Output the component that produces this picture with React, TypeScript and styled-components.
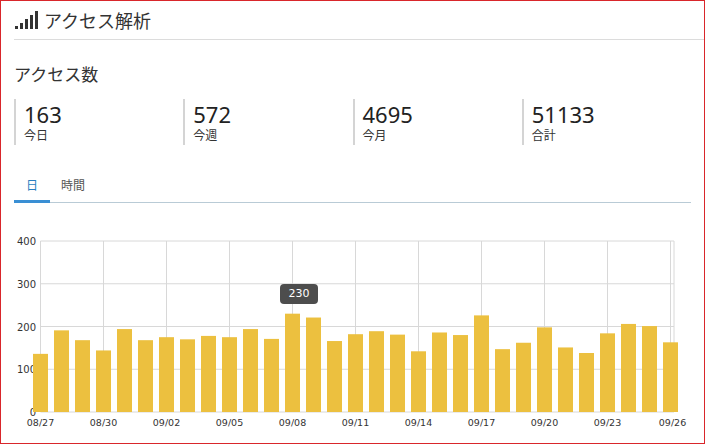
import React from "react";
import styled, { createGlobalStyle } from "styled-components";

const G = createGlobalStyle`
  html,body{margin:0;padding:0;background:#fff;}
  body{font-family:"Noto Sans CJK JP","Noto Sans",sans-serif;color:#222;}
`;
const Frame = styled.div`
  width:705px;height:444px;box-sizing:border-box;border:1px solid #d9262b;overflow:hidden;position:relative;
`;
const Header = styled.div`
  height:38px;margin:0 0 0 13px;border-bottom:1px solid #dcdcdc;display:flex;align-items:center;gap:4px;
  font-size:18px;color:#333;
`;
const Body = styled.div`padding:0 13px 0 13px;`;
const Title = styled.div`font-size:17px;margin-top:21px;height:26px;line-height:26px;color:#333;`;
const Stats = styled.div`display:flex;margin-top:12px;`;
const Stat = styled.div`
  width:180px;border-left:2px solid #d4d4d4;padding-left:8px;height:46px;box-sizing:border-box;
  display:flex;flex-direction:column;
`;
const Num = styled.div`font-family:"Noto Sans","Noto Sans CJK JP",sans-serif;font-size:22px;line-height:26px;margin-top:2px;color:#222;`;
const Lab = styled.div`font-size:12px;line-height:15px;color:#333;`;
const Tabs = styled.div`display:flex;margin-top:26px;border-bottom:1px solid #b9cbd6;`;
const Tab = styled.div<{ $active?: boolean }>`
  width:${p => (p.$active ? 36 : 46)}px;text-align:center;font-size:12px;padding:5px 0 7px;
  color:${p => (p.$active ? "#2a7fc1" : "#555")};
  border-bottom:3px solid ${p => (p.$active ? "#3a8fd4" : "transparent")};margin-bottom:-1px;
`;
const ChartWrap = styled.div`position:absolute;left:0;top:230px;`;
const Tip = styled.div`
  position:absolute;left:279px;top:53px;width:38px;height:20px;border-radius:4px;background:#4d4d4d;
  color:#fff;font-family:"DejaVu Sans",sans-serif;font-size:11px;line-height:20px;text-align:center;
`;

const vals = [136,191,168,144,194,168,175,170,178,175,194,171,230,221,166,182,189,181,142,186,180,226,147,162,198,151,138,184,206,201,163];
const start = new Date(2020, 7, 27);
const lbl = (i: number) => {
  const d = new Date(start.getTime() + i * 86400000);
  return `${String(d.getMonth() + 1).padStart(2, "0")}/${String(d.getDate()).padStart(2, "0")}`;
};

const Chart = () => {
  const x0 = 39.5, dx = 21, base = 181, k = 171 / 400, top = 10;
  return (
    <svg width="705" height="214" style={{ display: "block" }}>
      {[0, 100, 200, 300, 400].map(v => (
        <g key={v}>
          <line x1={x0} x2={673} y1={base - v * k} y2={base - v * k} stroke="#d8d8d8" />
          <text x={35} y={base - v * k + 4} fontSize="10" textAnchor="end" fill="#333" fontFamily="DejaVu Sans,sans-serif">{v}</text>
        </g>
      ))}
      {Array.from({ length: 11 }).map((_, j) => (
        <line key={j} x1={x0 + j * 63} x2={x0 + j * 63} y1={top} y2={base} stroke="#d8d8d8" />
      ))}
      <line x1={673} x2={673} y1={top} y2={base} stroke="#d8d8d8" />
      {vals.map((v, i) => (
        <rect key={i} x={x0 + i * dx - 7.5} y={base - v * k} width={15} height={v * k} fill="#ecc03f" />
      ))}
      {Array.from({ length: 11 }).map((_, j) => (
        <text key={j} x={x0 + j * 63 + (j === 10 ? 2 : 0)} y={base + 14} fontSize="9.5" textAnchor="middle" fill="#333" fontFamily="DejaVu Sans,sans-serif">{lbl(j * 3)}</text>
      ))}
    </svg>
  );
};

export default function App() {
  return (
    <Frame>
      <G />
      <Header>
        <svg width="26" height="20" viewBox="0 0 26 20">
          <rect x="1" y="16" width="3" height="3" fill="#333" />
          <rect x="6" y="13" width="3" height="6" fill="#333" />
          <rect x="11" y="9" width="3" height="10" fill="#333" />
          <rect x="16" y="5" width="3" height="14" fill="#333" />
          <rect x="21" y="1" width="3" height="18" fill="#333" />
        </svg>
        アクセス解析
      </Header>
      <Body>
        <Title>アクセス数</Title>
        <Stats>
          <Stat><Num>163</Num><Lab>今日</Lab></Stat>
          <Stat><Num>572</Num><Lab>今週</Lab></Stat>
          <Stat><Num>4695</Num><Lab>今月</Lab></Stat>
          <Stat><Num>51133</Num><Lab>合計</Lab></Stat>
        </Stats>
        <Tabs>
          <Tab $active>日</Tab>
          <Tab>時間</Tab>
        </Tabs>
      </Body>
      <ChartWrap>
        <Chart />
        <Tip>230</Tip>
      </ChartWrap>
    </Frame>
  );
}
